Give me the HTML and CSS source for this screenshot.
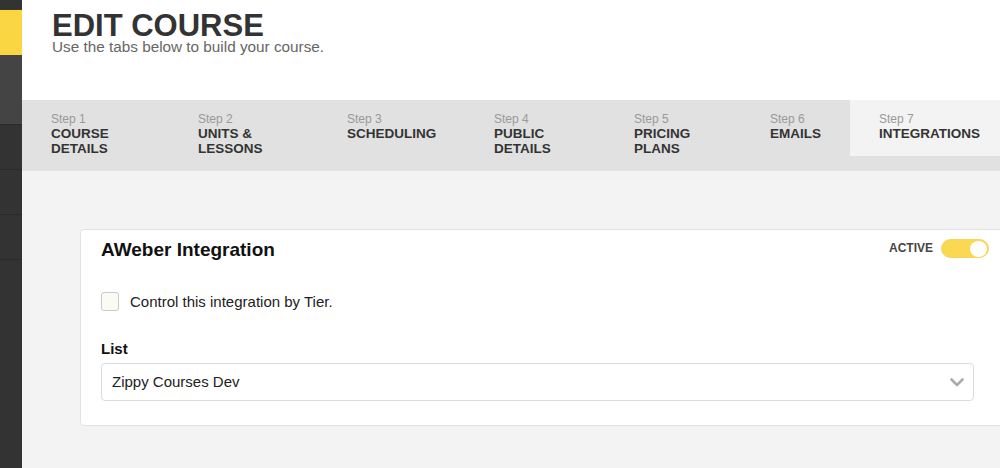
FILE: index.html
```html
<!DOCTYPE html>
<html>
<head>
<meta charset="utf-8">
<link rel="stylesheet" href="styles.css">
</head>
<body>
<div class="app">
  <aside class="sidebar">
    <div class="sb-top"></div>
    <div class="sb-yellow"></div>
    <div class="sb-mid"></div>
    <div class="sb-item"></div>
    <div class="sb-item"></div>
    <div class="sb-item"></div>
    <div class="sb-rest"></div>
  </aside>
  <main class="main">
    <header class="header">
      <h1 class="title">EDIT COURSE</h1>
      <p class="subtitle">Use the tabs below to build your course.</p>
    </header>
    <nav class="tabs">
      <div class="tab"><span class="step">Step 1</span><span class="tab-name">COURSE<br>DETAILS</span></div>
      <div class="tab"><span class="step">Step 2</span><span class="tab-name">UNITS &amp;<br>LESSONS</span></div>
      <div class="tab"><span class="step">Step 3</span><span class="tab-name">SCHEDULING</span></div>
      <div class="tab"><span class="step">Step 4</span><span class="tab-name">PUBLIC<br>DETAILS</span></div>
      <div class="tab"><span class="step">Step 5</span><span class="tab-name">PRICING<br>PLANS</span></div>
      <div class="tab"><span class="step">Step 6</span><span class="tab-name">EMAILS</span></div>
      <div class="tab tab-active"><span class="step">Step 7</span><span class="tab-name">INTEGRATIONS</span></div>
    </nav>
    <section class="content">
      <div class="card">
        <div class="card-head">
          <h2 class="card-title">AWeber Integration</h2>
          <div class="active-group">
            <span class="active-label">ACTIVE</span>
            <span class="toggle"><span class="knob"></span></span>
          </div>
        </div>
        <label class="check-row">
          <span class="checkbox"></span>
          <span class="check-label">Control this integration by Tier.</span>
        </label>
        <div class="field-label">List</div>
        <div class="select">
          <span class="select-value">Zippy Courses Dev</span>
          <svg class="chevron" width="14" height="9" viewBox="0 0 14 9"><polyline points="1.5,1.5 7,7 12.5,1.5" fill="none" stroke="#ababab" stroke-width="2.6" stroke-linecap="round" stroke-linejoin="round"/></svg>
        </div>
      </div>
    </section>
  </main>
</div>
</body>
</html>
```

FILE: styles.css
```css
html, body {
  margin: 0;
  padding: 0;
  height: 100%;
  overflow: hidden;
}
body {
  font-family: "Liberation Sans", Arial, Helvetica, sans-serif;
  color: #333;
  background: #f3f3f3;
}
.app {
  display: flex;
  height: 468px;
  overflow: hidden;
}
.sidebar {
  width: 22px;
  flex: 0 0 22px;
  display: flex;
  flex-direction: column;
  background: #333333;
}
.sb-top {
  height: 10px;
  background: #333333;
  border-bottom: 1px solid #3d3a2c;
  box-sizing: border-box;
}
.sb-yellow {
  height: 45px;
  background: #fbd643;
}
.sb-mid {
  height: 69px;
  background: #444444;
}
.sb-item {
  height: 45px;
  background: #333333;
  border-top: 1px solid #2a2a2a;
  box-sizing: border-box;
}
.sb-rest {
  flex: 1;
  background: #333333;
  border-top: 1px solid #2a2a2a;
}
.main {
  flex: 1;
  min-width: 0;
  display: flex;
  flex-direction: column;
  overflow: hidden;
}
.header {
  height: 100px;
  box-sizing: border-box;
  background: #ffffff;
  padding: 10px 0 0 30px;
}
.title {
  margin: 0;
  font-size: 31px;
  line-height: 31px;
  font-weight: 700;
  color: #333;
}
.subtitle {
  margin: 0;
  font-size: 15.3px;
  line-height: 12px;
  color: #666;
}
.tabs {
  height: 71px;
  background: #e1e1e1;
  display: grid;
  grid-template-columns: 147px 149px 147px 140px 136px 109px 1fr;
  align-items: start;
}
.tab {
  display: flex;
  flex-direction: column;
  padding: 12px 0 0 29px;
  box-sizing: border-box;
  height: 56px;
}
.tab-active {
  background: #f3f3f3;
}
.step {
  font-size: 12px;
  line-height: 15px;
  color: #999;
}
.tab-name {
  font-size: 13.5px;
  line-height: 15px;
  font-weight: 700;
  color: #333;
  margin-top: -1px;
}
.content {
  flex: 1;
  background: #f3f3f3;
  padding: 58px 0 0 58px;
}
.card {
  width: 940px;
  box-sizing: border-box;
  background: #fff;
  border: 1px solid #e2e2e2;
  border-radius: 4px;
  padding: 9px 21px 24px 20px;
}
.card-head {
  display: flex;
  justify-content: space-between;
  align-items: flex-start;
  width: 888px;
}
.card-title {
  margin: 0;
  font-size: 19px;
  line-height: 22px;
  font-weight: 700;
  color: #111;
}
.active-group {
  display: flex;
  align-items: center;
  gap: 8px;
}
.active-label {
  font-size: 12px;
  font-weight: 700;
  color: #444;
  line-height: 16px;
  margin-top: -2px;
}
.toggle {
  width: 48px;
  height: 19px;
  box-sizing: border-box;
  border-radius: 10px;
  background: #fad852;
  border: 1px solid #f6d560;
  display: flex;
  justify-content: flex-end;
  align-items: center;
  padding-right: 1px;
}
.knob {
  width: 17px;
  height: 16px;
  border-radius: 50%;
  background: #fff;
}
.check-row {
  display: flex;
  align-items: center;
  gap: 11px;
  margin-top: 31px;
  height: 19px;
}
.checkbox {
  width: 18px;
  height: 19px;
  box-sizing: border-box;
  border: 1px solid #c9c9c9;
  border-radius: 3px;
  background: #fbfbf3;
}
.check-label {
  font-size: 15px;
  line-height: 18px;
  color: #222;
}
.field-label {
  margin-top: 29px;
  font-size: 15px;
  line-height: 18px;
  font-weight: 700;
  color: #111;
}
.select {
  margin-top: 5px;
  width: 873px;
  height: 38px;
  box-sizing: border-box;
  border: 1px solid #dcdcdc;
  border-radius: 4px;
  display: flex;
  align-items: center;
  justify-content: space-between;
  padding: 0 9px 0 10px;
}
.select-value {
  font-size: 15px;
  color: #222;
  line-height: 18px;
}
.chevron {
  display: block;
}
```
